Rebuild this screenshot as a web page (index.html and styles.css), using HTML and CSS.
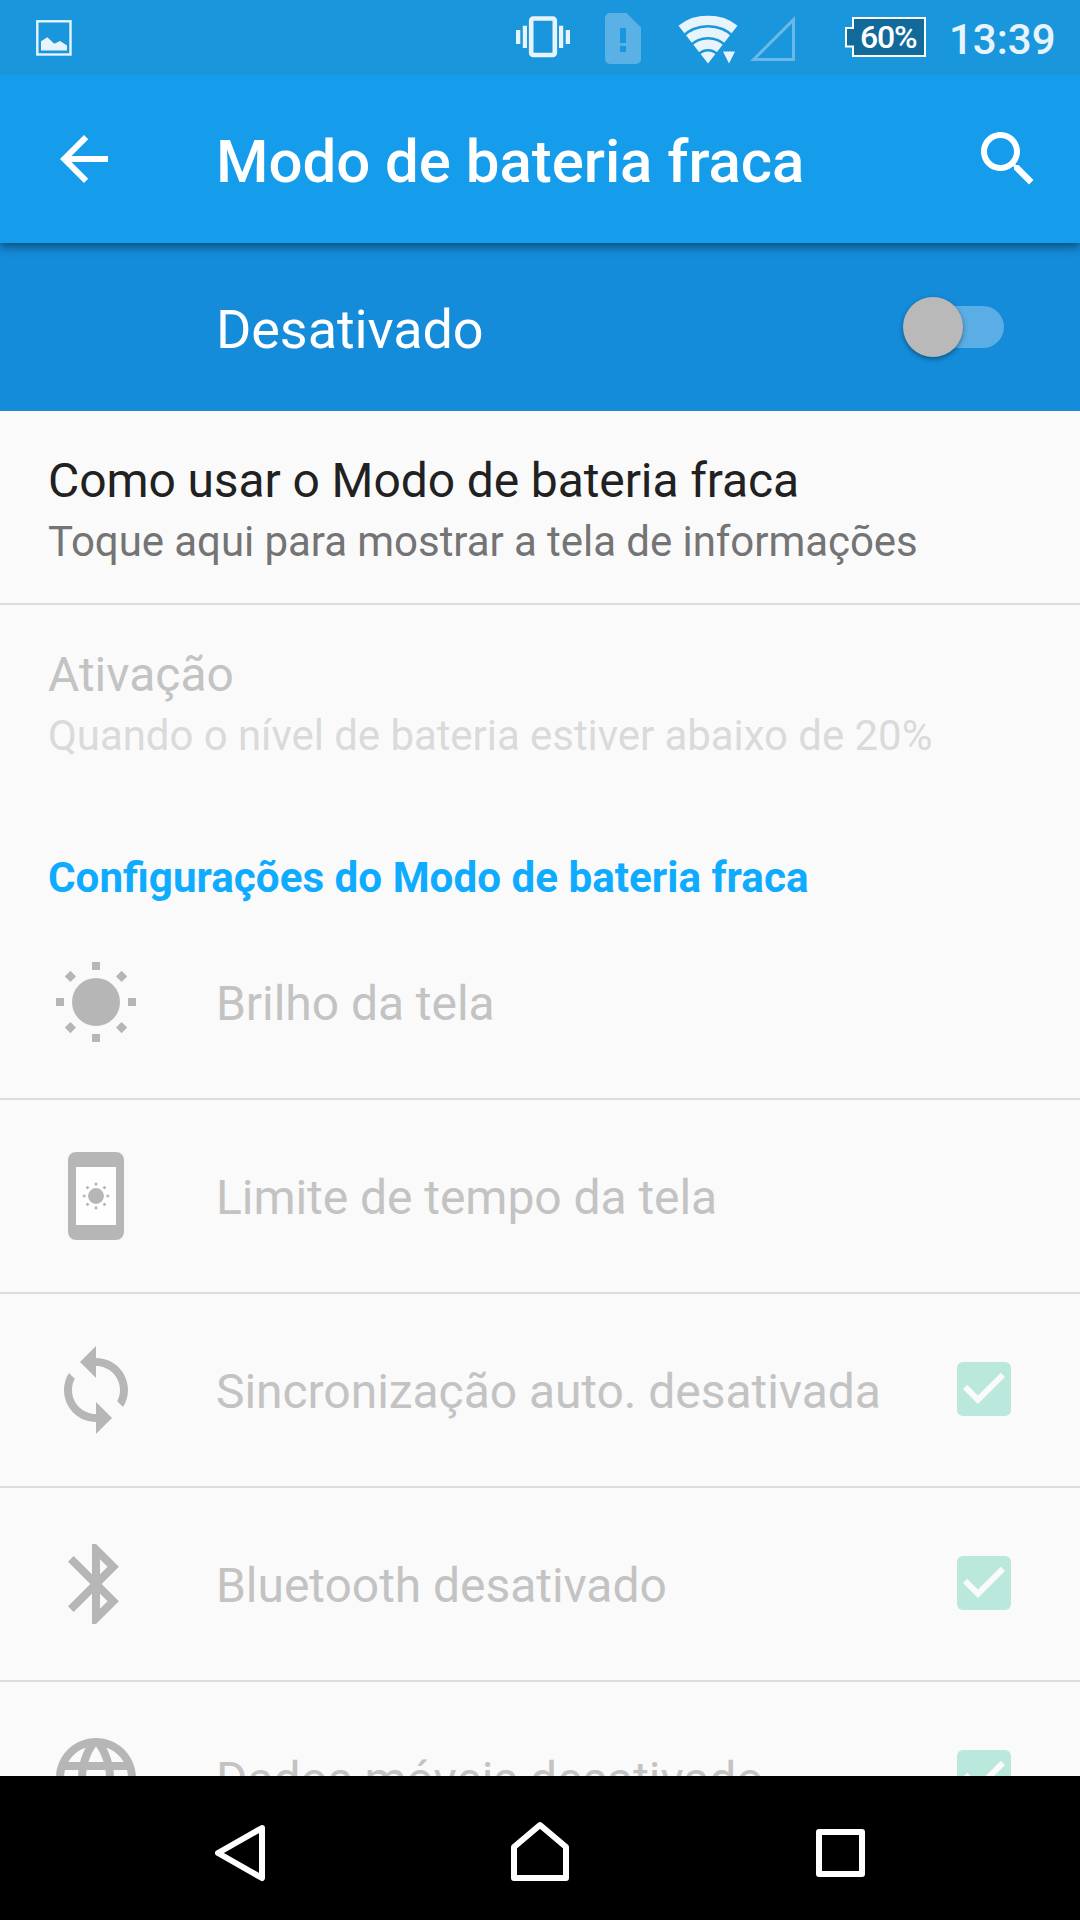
FILE: index.html
```html
<!DOCTYPE html>
<html lang="pt-BR">
<head>
<meta charset="utf-8">
<title>Modo de bateria fraca</title>
<link rel="stylesheet" href="styles.css">
</head>
<body>
<div class="screen">
  <header class="status-bar">
    <svg class="status-picture" width="36" height="36" viewBox="0 0 36 36"><rect x="1.3" y="1.3" width="33.2" height="33.2" fill="none" stroke="currentColor" stroke-width="2.4"/><path fill="currentColor" d="M5 30.500V21.200L11.300 17.200l7 6.600L24 21l7 4.500v5z"/></svg>
    <svg class="status-vibrate" width="54" height="42" viewBox="0 0 54 42"><rect x="15.200" y="2.500" width="23.600" height="36.500" rx="2" fill="none" stroke="currentColor" stroke-width="4.600"/><path fill="currentColor" d="M0 14h4.300v14H0zM6.800 9.700h4.200v22.300H6.800zM43 9.700h4.200v22.300H43zM49.700 14H54v14h-4.300z"/></svg>
    <svg class="status-sim" width="36" height="51" viewBox="0 0 36 51"><path fill="currentColor" fill-rule="evenodd" d="M5 0h16.500L36 14.500V46a5 5 0 0 1-5 5H5a5 5 0 0 1-5-5V5a5 5 0 0 1 5-5zM15 15v15h6V15zM15 33v6h6v-6z"/></svg>
    <svg class="status-wifi" width="60" height="49" viewBox="0 0 60 49">
      <clipPath id="fan"><path d="M30 48.500L-7.300 0.500H67.300z"/></clipPath>
      <g clip-path="url(#fan)" fill="none" stroke="currentColor"><circle cx="30" cy="48.500" r="43.300" stroke-width="9.400"/><circle cx="30" cy="48.500" r="31.300" stroke-width="9.400"/><circle cx="30" cy="48.500" r="19.300" stroke-width="9.400"/><circle cx="30" cy="48.500" r="6" stroke-width="12"/></g>
      <path fill="currentColor" d="M45 36.500h12L51 48.500z"/>
    </svg>
    <svg class="status-signal" width="45" height="45" viewBox="0 0 45 45"><path fill="none" stroke="currentColor" stroke-width="3" d="M3.600 43.500L43.500 3.600V43.500z"/></svg>
    <div class="battery">
      <svg class="battery-shape" width="81" height="40" viewBox="0 0 81 40"><path d="M8 1H80V39H8V29.500H1V11H8z" fill="#126a9b" stroke="#fff" stroke-width="2"/></svg>
      <span class="battery-level">60%</span>
    </div>
    <span class="clock">13:39</span>
  </header>

  <div class="app-bar">
    <svg class="app-icon" viewBox="0 0 24 24"><path d="M20 11H7.830l5.590-5.590L12 4l-8 8 8 8 1.410-1.410L7.830 13H20v-2z"/></svg>
    <h1 class="title">Modo de bateria fraca</h1>
    <svg class="app-icon" viewBox="0 0 24 24"><path d="M15.500 14h-.79l-.28-.27C15.410 12.590 16 11.110 16 9.500 16 5.910 13.090 3 9.500 3S3 5.910 3 9.500 5.910 16 9.500 16c1.610 0 3.090-.59 4.230-1.570l.27.28v.79l5 4.990L20.490 19l-4.990-5zm-6 0C7.010 14 5 11.990 5 9.500S7.010 5 9.500 5 14 7.010 14 9.500 11.990 14 9.500 14z"/></svg>
  </div>

  <div class="switch-bar">
    <span class="switch-label">Desativado</span>
    <span class="switch"><span class="thumb"></span></span>
  </div>

  <main class="list">
    <div class="pref ruled">
      <div class="pref-title">Como usar o Modo de bateria fraca</div>
      <div class="pref-summary">Toque aqui para mostrar a tela de informações</div>
    </div>
    <div class="pref disabled">
      <div class="pref-title">Ativação</div>
      <div class="pref-summary">Quando o nível de bateria estiver abaixo de 20%</div>
    </div>
    <h2 class="section">Configurações do Modo de bateria fraca</h2>

    <div class="row">
      <svg class="row-icon" viewBox="-48 -48 96 96">
        <g id="sun"><circle r="24"/><path d="M-4-40h8v8h-8zM-4 32h8v8h-8zM-40-4h8v8h-8zM32-4h8v8h-8z"/><path d="M-25.600-31.200l5.600 5.600-5.600 5.600-5.600-5.600zM25.600-31.200l5.600 5.600-5.600 5.600-5.600-5.600zM-25.600 20l5.600 5.600-5.600 5.600-5.600-5.600zM25.600 20l5.600 5.600-5.600 5.600-5.600-5.600z"/></g>
      </svg>
      <span class="row-label">Brilho da tela</span>
    </div>
    <div class="row">
      <svg class="row-icon" viewBox="-48 -48 96 96">
        <rect x="-28" y="-44" width="56" height="88" rx="8"/>
        <rect x="-20" y="-29" width="40" height="58" fill="#fefefe"/>
        <use href="#sun" transform="scale(.33)"/>
      </svg>
      <span class="row-label">Limite de tempo da tela</span>
    </div>
    <div class="row">
      <svg class="row-icon sync" viewBox="0 0 24 24"><path d="M12 4V1L8 5l4 4V6c3.310 0 6 2.690 6 6 0 1.010-.25 1.970-.7 2.800l1.460 1.460C19.540 15.030 20 13.570 20 12c0-4.420-3.580-8-8-8zm0 14c-3.310 0-6-2.690-6-6 0-1.010.25-1.970.7-2.800L5.240 7.740C4.460 8.970 4 10.430 4 12c0 4.420 3.580 8 8 8v3l4-4-4-4v3z"/></svg>
      <span class="row-label">Sincronização auto. desativada</span>
      <svg class="check" viewBox="0 0 24 24"><rect x="3" y="3" width="18" height="18" rx="2"/><path d="M10 17l-5-5 1.410-1.410L10 14.170l7.590-7.590L19 8l-9 9z"/></svg>
    </div>
    <div class="row">
      <svg class="row-icon" viewBox="0 0 24 24"><path d="M17.710 7.710L12 2h-1v7.590L6.410 5 5 6.410 10.590 12 5 17.590 6.410 19 11 14.410V22h1l5.710-5.710-4.300-4.290 4.300-4.290zM13 5.830l1.880 1.880L13 9.590V5.830zm1.880 10.460L13 18.170v-3.760l1.880 1.880z"/></svg>
      <span class="row-label">Bluetooth desativado</span>
      <svg class="check" viewBox="0 0 24 24"><rect x="3" y="3" width="18" height="18" rx="2"/><path d="M10 17l-5-5 1.410-1.410L10 14.170l7.590-7.590L19 8l-9 9z"/></svg>
    </div>
    <div class="row">
      <svg class="row-icon" viewBox="0 0 24 24"><path d="M11.990 2C6.470 2 2 6.480 2 12s4.470 10 9.990 10C17.520 22 22 17.520 22 12S17.520 2 11.990 2zm6.930 6h-2.950c-.32-1.250-.78-2.450-1.380-3.560 1.840.63 3.370 1.910 4.330 3.560zM12 4.040c.83 1.200 1.480 2.530 1.910 3.960h-3.820c.43-1.430 1.080-2.760 1.910-3.960zM4.260 14C4.100 13.360 4 12.690 4 12s.1-1.360.26-2h3.380c-.08.66-.14 1.320-.14 2 0 .68.06 1.340.14 2H4.260zm.82 2h2.950c.32 1.250.78 2.450 1.380 3.560-1.840-.63-3.370-1.900-4.330-3.560zm2.950-8H5.080c.96-1.660 2.490-2.930 4.330-3.560C8.810 5.550 8.350 6.750 8.030 8zM12 19.960c-.83-1.200-1.480-2.530-1.910-3.960h3.820c-.43 1.430-1.080 2.760-1.910 3.960zM14.340 14H9.660c-.09-.66-.16-1.320-.16-2 0-.68.07-1.350.16-2h4.680c.09.65.16 1.320.16 2 0 .68-.07 1.340-.16 2zm.25 5.560c.6-1.110 1.060-2.310 1.380-3.560h2.950c-.96 1.650-2.490 2.930-4.330 3.560zM16.360 14c.08-.66.14-1.320.14-2 0-.68-.06-1.340-.14-2h3.380c.16.64.26 1.310.26 2s-.1 1.360-.26 2h-3.380z"/></svg>
      <span class="row-label">Dados móveis desativado</span>
      <svg class="check" viewBox="0 0 24 24"><rect x="3" y="3" width="18" height="18" rx="2"/><path d="M10 17l-5-5 1.410-1.410L10 14.170l7.590-7.590L19 8l-9 9z"/></svg>
    </div>
  </main>

  <nav class="nav-bar">
    <svg class="nav-icon" viewBox="0 0 72 72"><path d="M58 11L14 36l44 25z"/></svg>
    <svg class="nav-icon" viewBox="0 0 72 72"><path d="M10 61V30L36 8l26 22V61z"/></svg>
    <svg class="nav-icon" viewBox="0 0 72 72"><path d="M15 15H58V57H15z"/></svg>
  </nav>
</div>
</body>
</html>
```

FILE: styles.css
```css
* {
  box-sizing: border-box;
}

body {
  margin: 0;
  font-family: Roboto, "Noto Sans", sans-serif;
}

svg {
  display: block;
  flex: none;
}

.screen {
  display: flex;
  flex-direction: column;
  width: 1080px;
  height: 1920px;
  overflow: hidden;
  background: #fafafa;
}

/* Status bar */
.status-bar {
  display: flex;
  align-items: flex-start;
  flex: none;
  height: 75px;
  padding-left: 36px;
  background: #1a96dc;
  color: #e8f4fc;
}

.status-picture {
  margin-top: 20px;
}

.status-vibrate {
  margin: 16px 0 0 444px;
}

.status-sim {
  margin: 13px 0 0 35px;
  color: #5ab1e6;
}

.status-wifi {
  margin: 15px 0 0 37px;
}

.status-signal {
  margin: 16px 0 0 12px;
  color: #69b8e8;
}

.battery {
  display: grid;
  width: 81px;
  margin: 17px 0 0 50px;
  color: #fff;
}

.battery-shape,
.battery-level {
  grid-area: 1 / 1;
}

.battery-level {
  padding-left: 15px;
  font-size: 32px;
  font-weight: 500;
  line-height: 40px;
  letter-spacing: -1.2px;
}

.clock {
  margin-left: 23px;
  font-size: 42px;
  font-weight: 500;
  line-height: 80px;
}

/* App bar */
.app-bar {
  position: relative;
  z-index: 1;
  display: flex;
  align-items: center;
  flex: none;
  height: 168px;
  padding: 0 36px 0 48px;
  background: #159ceb;
  box-shadow: 0 4px 9px rgba(0, 0, 0, 0.45);
  clip-path: inset(0 0 -20px 0);
  color: #fff;
}

.app-icon {
  width: 72px;
  height: 72px;
  fill: currentColor;
}

.title {
  flex: 1;
  margin: 6px 0 0 96px;
  font-size: 60px;
  font-weight: 500;
  line-height: 72px;
  letter-spacing: -0.05px;
}

/* Master switch */
.switch-bar {
  display: flex;
  align-items: center;
  justify-content: space-between;
  flex: none;
  height: 168px;
  padding: 0 76px 0 216px;
  background: #148cda;
  color: #fff;
}

.switch-label {
  padding-top: 4px;
  font-size: 54px;
  letter-spacing: -0.1px;
}

.switch {
  display: flex;
  align-items: center;
  width: 93px;
  height: 42px;
  border-radius: 21px;
  background: #5aaee5;
}

.thumb {
  width: 60px;
  height: 60px;
  margin: -1px 0 0 -8.5px;
  border-radius: 50%;
  background: #b9b9b9;
  box-shadow: 0 2px 5px rgba(0, 0, 0, 0.4);
}

/* Preferences */
.list {
  flex: 1;
  min-height: 0;
  overflow: hidden;
}

.pref {
  height: 192px;
  padding: 41px 48px 0;
}

.pref.ruled {
  height: 194px;
  border-bottom: 2px solid #dcdcdc;
}

.pref-title {
  color: #212121;
  font-size: 48px;
  line-height: 57px;
  letter-spacing: -0.1px;
}

.pref-summary {
  margin-top: 8px;
  color: #747474;
  font-size: 42px;
  line-height: 49px;
  letter-spacing: -0.06px;
}

.disabled .pref-title {
  color: #c3c3c3;
  letter-spacing: 0;
}

.disabled .pref-summary {
  color: #dadada;
}

.section {
  height: 109px;
  margin: 0;
  padding: 56px 48px 0;
  color: #0fabff;
  font-size: 42.2px;
  font-weight: 700;
  line-height: 49px;
}

.row {
  display: flex;
  align-items: center;
  height: 194px;
  padding: 0 60px 0 48px;
  border-bottom: 2px solid #dcdcdc;
}

.row-icon {
  width: 96px;
  height: 96px;
  fill: #b6b6b6;
}

.row-icon.sync {
  margin-bottom: 1px;
}

.row-label {
  flex: 1;
  margin: 4px 0 0 72px;
  color: #c3c3c3;
  font-size: 48px;
  line-height: 56px;
  letter-spacing: -0.05px;
}

.check {
  width: 72px;
  height: 72px;
  margin-bottom: 2px;
}

.check rect {
  fill: #bae8dc;
}

.check path {
  fill: #fafafa;
}

/* Navigation */
.nav-bar {
  display: flex;
  justify-content: center;
  gap: 228px;
  flex: none;
  height: 144px;
  padding-top: 41px;
  background: #000;
}

.nav-icon {
  width: 72px;
  height: 72px;
  fill: none;
  stroke: #fff;
  stroke-width: 6;
  stroke-linejoin: round;
}
```
